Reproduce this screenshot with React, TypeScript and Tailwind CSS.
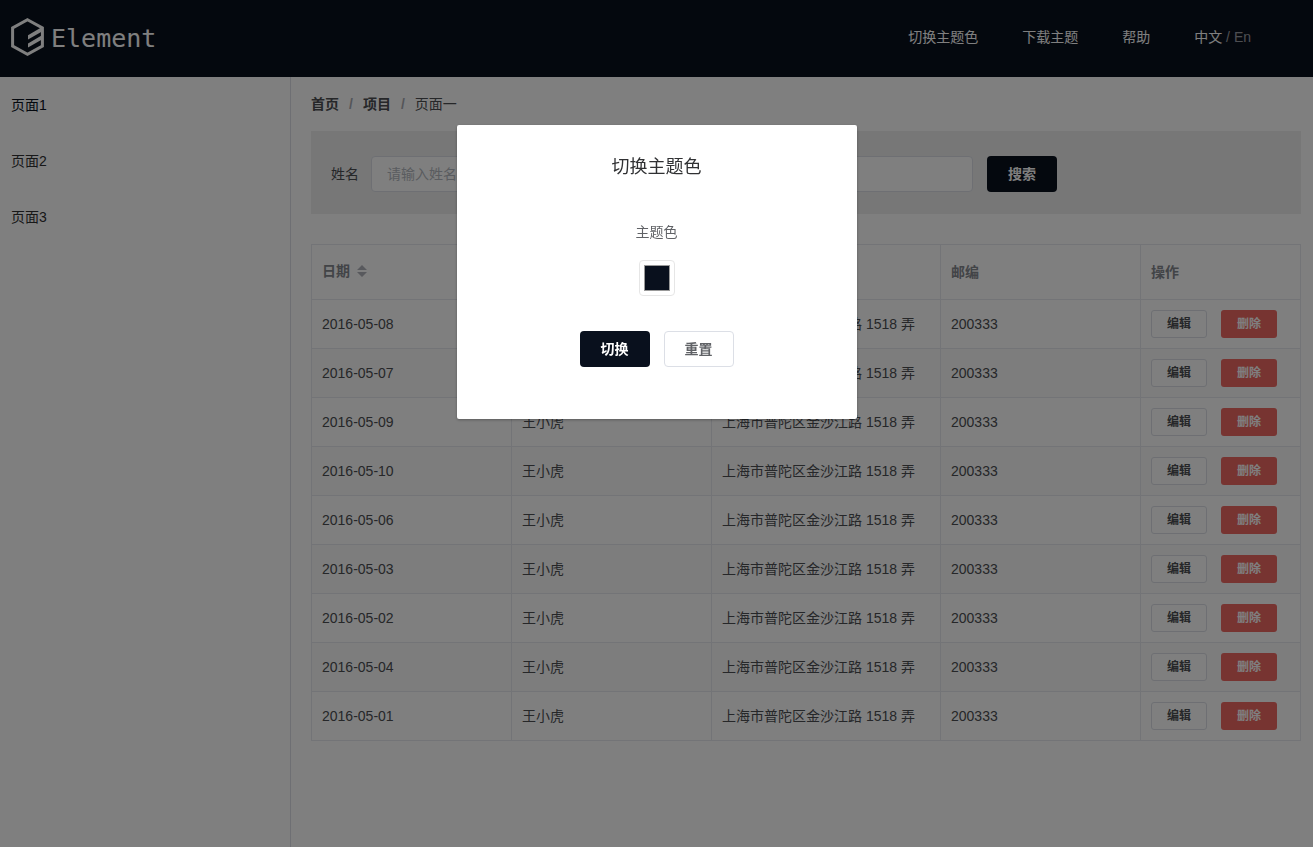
import React, { useState } from 'react';

const navItems = ['切换主题色', '下载主题', '帮助'];

const pages = ['页面1', '页面2', '页面3'];

const rows = [
  '2016-05-08',
  '2016-05-07',
  '2016-05-09',
  '2016-05-10',
  '2016-05-06',
  '2016-05-03',
  '2016-05-02',
  '2016-05-04',
  '2016-05-01',
].map((date) => ({ date, name: '王小虎', address: '上海市普陀区金沙江路 1518 弄', zip: '200333' }));

function Logo() {
  return (
    <a href="#" className="flex items-center gap-1.5 text-white">
      <svg width="35" height="40" viewBox="0 0 35 40" fill="none" aria-hidden="true">
        <path d="M17.5 2.8 32.4 11v18L17.5 37.2 2.6 29V11z" stroke="currentColor" strokeWidth="3" />
        <path d="M18 18.2 32 10v4.6L18 22.6z" fill="currentColor" />
        <path d="M18 26.4 32 18.2v4.4L18 30.6z" fill="currentColor" />
      </svg>
      <span className="pt-1 font-['DejaVu_Sans_Mono',monospace] text-[25px] leading-8">Element</span>
    </a>
  );
}

function Header() {
  return (
    <header className="flex h-[77px] items-center justify-between bg-[#09101d] pr-[62px] pb-1 pl-2.5">
      <Logo />
      <nav className="flex items-center gap-11 text-white">
        {navItems.map((item) => (
          <a key={item} href="#">{item}</a>
        ))}
        <span className="text-white/60">
          <a href="#" className="text-white">中文</a> / <a href="#">En</a>
        </span>
      </nav>
    </header>
  );
}

function Sidebar() {
  return (
    <aside className="w-[291px] shrink-0 border-r border-[#dcdfe6]">
      {pages.map((page, i) => (
        <a key={page} href="#" className={`block h-14 px-[11px] leading-[56px] ${i === 0 ? 'text-[#09101d]' : 'text-[#303133]'}`}>
          {page}
        </a>
      ))}
    </aside>
  );
}

function Breadcrumb() {
  return (
    <nav className="flex items-center gap-2.5 leading-5 text-[#4c4e52]">
      <a href="#" className="font-bold">首页</a>
      <span className="font-bold text-[#a8abb2]">/</span>
      <a href="#" className="font-bold">项目</a>
      <span className="font-bold text-[#a8abb2]">/</span>
      <span>页面一</span>
    </nav>
  );
}

function SearchBar() {
  return (
    <form className="mt-[17px] flex items-center bg-[#efefef] px-5 pt-[25px] pb-[22px]" onSubmit={(e) => e.preventDefault()}>
      <label htmlFor="name" className="mr-3 text-[#4c4e52]">姓名</label>
      <input
        id="name"
        placeholder="请输入姓名"
        className="h-9 max-w-[602px] flex-1 rounded border border-[#dcdfe6] bg-white px-[15px] outline-none placeholder:text-[#b4b8c0]"
      />
      <button type="submit" className="ml-3.5 h-9 w-[70px] rounded bg-[#09101d] font-bold text-white">搜索</button>
    </form>
  );
}

function DataTable() {
  const cell = 'border border-[#e6e8ee] px-2.5';

  return (
    <table className="mt-[30px] w-full table-fixed border-collapse text-left">
      <colgroup>
        <col className="w-[200px]" />
        <col className="w-[200px]" />
        <col />
        <col className="w-[200px]" />
        <col className="w-[160px]" />
      </colgroup>
      <thead className="text-[#85888f]">
        <tr className="h-[55px]">
          <th className={cell}>
            <button className="flex items-center gap-[7px] pb-0.5 font-bold">
              日期
              <svg width="10" height="12" viewBox="0 0 10 12" fill="#b0b3ba" aria-hidden="true">
                <path d="M5 0l5 5H0zM5 12l5-5H0z" />
              </svg>
            </button>
          </th>
          <th className={cell}>姓名</th>
          <th className={cell}>地址</th>
          <th className={cell}>邮编</th>
          <th className={cell}>操作</th>
        </tr>
      </thead>
      <tbody className="text-[#4c4e52]">
        {rows.map((row) => (
          <tr key={row.date} className="h-[49px] even:bg-[#fafafa]">
            <td className={cell}>{row.date}</td>
            <td className={cell}>{row.name}</td>
            <td className={cell}>{row.address}</td>
            <td className={cell}>{row.zip}</td>
            <td className={cell}>
              <div className="flex gap-3.5 text-xs font-bold">
                <button className="h-7 w-14 rounded-[3px] border border-[#dcdfe6] bg-white">编辑</button>
                <button className="h-7 w-14 rounded-[3px] bg-[#ee6862] text-white">删除</button>
              </div>
            </td>
          </tr>
        ))}
      </tbody>
    </table>
  );
}

function ThemeDialog() {
  const [color, setColor] = useState('#09101d');

  return (
    <div className="fixed inset-0 flex items-start justify-center bg-black/50 pt-[125px]">
      <div role="dialog" aria-labelledby="dialog-title" className="flex w-[400px] flex-col items-center rounded-xs bg-white pt-[30px] pb-[52px] shadow-[0_1px_3px_rgba(0,0,0,0.3)]">
        <h2 id="dialog-title" className="text-lg leading-6 text-[#303133]">切换主题色</h2>
        <label htmlFor="theme-color" className="mt-[43px] leading-5 text-[#606266]">主题色</label>
        <input
          id="theme-color"
          type="color"
          value={color}
          onChange={(e) => setColor(e.target.value)}
          className="mt-[18px] size-9 appearance-none rounded border border-[#e6e6e6] bg-white p-1 [&::-webkit-color-swatch]:rounded-none [&::-webkit-color-swatch]:border-[#999] [&::-webkit-color-swatch-wrapper]:p-0"
        />
        <div className="mt-[35px] flex gap-3.5 font-bold">
          <button className="h-9 w-[70px] rounded bg-[#09101d] text-white">切换</button>
          <button className="h-9 w-[70px] rounded border border-[#dcdfe6] bg-white text-[#606266]">重置</button>
        </div>
      </div>
    </div>
  );
}

export default function App() {
  return (
    <div className="flex min-h-screen flex-col bg-white font-['Liberation_Sans','Noto_Sans_CJK_SC',sans-serif] text-sm">
      <Header />
      <div className="flex flex-1">
        <Sidebar />
        <main className="min-w-0 flex-1 pt-[17px] pr-3 pl-5">
          <Breadcrumb />
          <SearchBar />
          <DataTable />
        </main>
      </div>
      <ThemeDialog />
    </div>
  );
}
